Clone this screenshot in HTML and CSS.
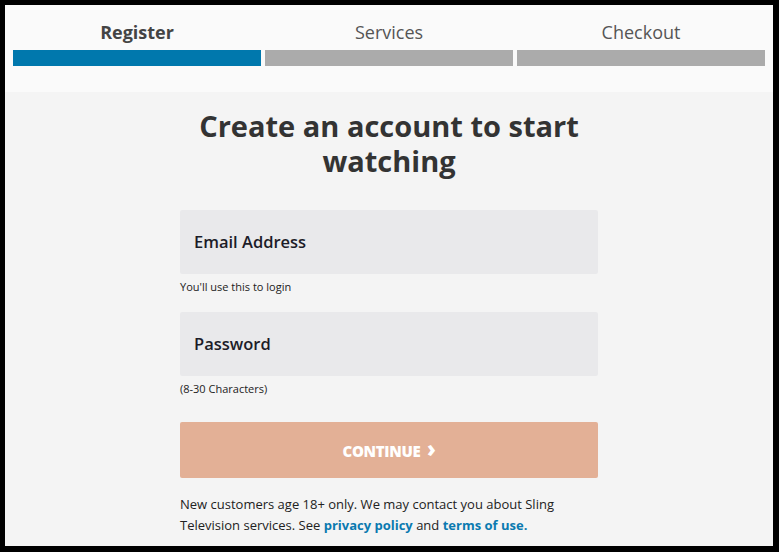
FILE: index.html
```html
<!DOCTYPE html>
<html lang="en">
<head>
    <meta charset="UTF-8">
    <meta name="viewport" content="width=device-width, initial-scale=1.0">
    <title>Create an account</title>
    <link rel="stylesheet" href="styles.css">
</head>
<body>
    <div class="page">
        <div class="steps">
            <div class="step active">
                <div class="label">Register</div>
                <div class="bar"></div>
            </div>
            <div class="step">
                <div class="label">Services</div>
                <div class="bar"></div>
            </div>
            <div class="step">
                <div class="label">Checkout</div>
                <div class="bar"></div>
            </div>
        </div>

        <div class="main">
            <h1>Create an account to start<br>watching</h1>
            <form class="form">
                <div class="field">Email Address</div>
                <div class="hint">You'll use this to login</div>
                <div class="field">Password</div>
                <div class="hint">(8-30 Characters)</div>
                <button type="button" class="continue">CONTINUE <span class="chev">&rsaquo;</span></button>
                <p class="legal">New customers age 18+ only. We may contact you about Sling Television services. See <a href="#">privacy policy</a> and <a href="#">terms of use.</a></p>
            </form>
        </div>
    </div>
</body>
</html>
```

FILE: styles.css
```css
html, body {
    margin: 0;
    padding: 0;
    background: #000;
}
body {
    font-family: "Open Sans", sans-serif;
    color: #333;
}
.page {
    margin: 5px 6px 0 5px;
    height: 541px;
    background: #f4f4f4;
    overflow: hidden;
}
.steps {
    display: flex;
    gap: 4px;
    padding: 15px 8px 26px;
    background: #fafafa;
}
.step {
    flex: 1;
    text-align: center;
}
.step .label {
    font-size: 18px;
    line-height: 24px;
    color: #555;
    margin-bottom: 6px;
}
.step .bar {
    height: 16px;
    background: #ababab;
}
.step.active .label {
    font-weight: bold;
    color: #444;
}
.step.active .bar {
    background: #0078ad;
}
.main {
    padding-top: 16px;
}
h1 {
    margin: 0;
    text-align: center;
    font-size: 29px;
    line-height: 35px;
    font-weight: bold;
    color: #333;
}
.form {
    width: 418px;
    margin: 32px auto 0;
}
.field {
    height: 64px;
    line-height: 64px;
    padding-left: 14px;
    background: #e9e9eb;
    border-radius: 2px;
    font-size: 16.5px;
    font-weight: 600;
    color: #1c1c28;
}
.hint {
    font-size: 11px;
    line-height: 14px;
    margin: 6px 0 18px;
    color: #222;
}
.hint:nth-of-type(4) {
    margin-bottom: 26px;
}
.continue {
    display: block;
    width: 100%;
    height: 56px;
    padding: 0 0 5px;
    border: none;
    border-radius: 2px;
    background: #e3b096;
    color: #fff;
    font-family: inherit;
    font-size: 15px;
    font-weight: 800;
    letter-spacing: -0.3px;
}
.continue .chev {
    font-size: 22px;
    margin-left: 3px;
}
.legal {
    margin: 16px 0 0;
    font-size: 13px;
    line-height: 21px;
    color: #222;
}
.legal a {
    color: #0a7ab0;
    font-weight: bold;
    text-decoration: none;
}
```
